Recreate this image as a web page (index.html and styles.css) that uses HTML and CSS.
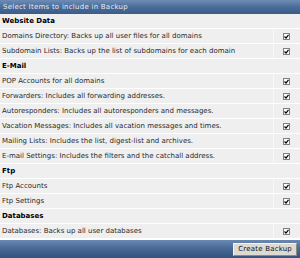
FILE: index.html
```html
<!DOCTYPE html>
<html>
<head>
<meta charset="utf-8">
<link rel="stylesheet" href="styles.css">
</head>
<body>
<div class="panel">
  <div class="head">Select Items to include in Backup</div>
  <div class="row section"><span class="label">Website Data</span></div>
  <div class="row item"><span class="label">Domains Directory: Backs up all user files for all domains</span><span class="cb"><svg width="7" height="7" viewBox="0 0 7 7"><rect x="0.5" y="0.5" width="6" height="6" fill="#fff" stroke="#808080"/><path d="M1.5 3.5 L3 5 L5.5 1.8" fill="none" stroke="#000" stroke-width="1.2"/></svg></span></div>
  <div class="row item"><span class="label">Subdomain Lists: Backs up the list of subdomains for each domain</span><span class="cb"><svg width="7" height="7" viewBox="0 0 7 7"><rect x="0.5" y="0.5" width="6" height="6" fill="#fff" stroke="#808080"/><path d="M1.5 3.5 L3 5 L5.5 1.8" fill="none" stroke="#000" stroke-width="1.2"/></svg></span></div>
  <div class="row section"><span class="label">E-Mail</span></div>
  <div class="row item"><span class="label">POP Accounts for all domains</span><span class="cb"><svg width="7" height="7" viewBox="0 0 7 7"><rect x="0.5" y="0.5" width="6" height="6" fill="#fff" stroke="#808080"/><path d="M1.5 3.5 L3 5 L5.5 1.8" fill="none" stroke="#000" stroke-width="1.2"/></svg></span></div>
  <div class="row item"><span class="label">Forwarders: Includes all forwarding addresses.</span><span class="cb"><svg width="7" height="7" viewBox="0 0 7 7"><rect x="0.5" y="0.5" width="6" height="6" fill="#fff" stroke="#808080"/><path d="M1.5 3.5 L3 5 L5.5 1.8" fill="none" stroke="#000" stroke-width="1.2"/></svg></span></div>
  <div class="row item"><span class="label">Autoresponders: Includes all autoresponders and messages.</span><span class="cb"><svg width="7" height="7" viewBox="0 0 7 7"><rect x="0.5" y="0.5" width="6" height="6" fill="#fff" stroke="#808080"/><path d="M1.5 3.5 L3 5 L5.5 1.8" fill="none" stroke="#000" stroke-width="1.2"/></svg></span></div>
  <div class="row item"><span class="label">Vacation Messages: Includes all vacation messages and times.</span><span class="cb"><svg width="7" height="7" viewBox="0 0 7 7"><rect x="0.5" y="0.5" width="6" height="6" fill="#fff" stroke="#808080"/><path d="M1.5 3.5 L3 5 L5.5 1.8" fill="none" stroke="#000" stroke-width="1.2"/></svg></span></div>
  <div class="row item"><span class="label">Mailing Lists: Includes the list, digest-list and archives.</span><span class="cb"><svg width="7" height="7" viewBox="0 0 7 7"><rect x="0.5" y="0.5" width="6" height="6" fill="#fff" stroke="#808080"/><path d="M1.5 3.5 L3 5 L5.5 1.8" fill="none" stroke="#000" stroke-width="1.2"/></svg></span></div>
  <div class="row item"><span class="label">E-mail Settings: Includes the filters and the catchall address.</span><span class="cb"><svg width="7" height="7" viewBox="0 0 7 7"><rect x="0.5" y="0.5" width="6" height="6" fill="#fff" stroke="#808080"/><path d="M1.5 3.5 L3 5 L5.5 1.8" fill="none" stroke="#000" stroke-width="1.2"/></svg></span></div>
  <div class="row section"><span class="label">Ftp</span></div>
  <div class="row item"><span class="label">Ftp Accounts</span><span class="cb"><svg width="7" height="7" viewBox="0 0 7 7"><rect x="0.5" y="0.5" width="6" height="6" fill="#fff" stroke="#808080"/><path d="M1.5 3.5 L3 5 L5.5 1.8" fill="none" stroke="#000" stroke-width="1.2"/></svg></span></div>
  <div class="row item"><span class="label">Ftp Settings</span><span class="cb"><svg width="7" height="7" viewBox="0 0 7 7"><rect x="0.5" y="0.5" width="6" height="6" fill="#fff" stroke="#808080"/><path d="M1.5 3.5 L3 5 L5.5 1.8" fill="none" stroke="#000" stroke-width="1.2"/></svg></span></div>
  <div class="row section"><span class="label">Databases</span></div>
  <div class="row item"><span class="label">Databases: Backs up all user databases</span><span class="cb"><svg width="7" height="7" viewBox="0 0 7 7"><rect x="0.5" y="0.5" width="6" height="6" fill="#fff" stroke="#808080"/><path d="M1.5 3.5 L3 5 L5.5 1.8" fill="none" stroke="#000" stroke-width="1.2"/></svg></span></div>
  <div class="foot"><button class="btn">Create Backup</button></div>
</div>
</body>
</html>
```
FILE: styles.css
```css
html, body {
  margin: 0;
  padding: 0;
  background: #ffffff;
}
.panel {
  width: 300px;
  height: 258px;
  display: flex;
  flex-direction: column;
  font-family: "DejaVu Sans", sans-serif;
  font-size: 7px;
  color: #2a2a2a;
  overflow: hidden;
}
.head {
  height: 14px;
  box-sizing: border-box;
  padding: 0 3px;
  display: flex;
  align-items: center;
  letter-spacing: 0.25px;
  color: #e4ebf4;
  background: linear-gradient(#6d8db6, #4a6c98 50%, #3b5c88);
}
.row {
  height: 15px;
  box-sizing: border-box;
  display: grid;
  grid-template-columns: 1fr 27px;
  background: #efefef;
  border-bottom: 1px solid #ffffff;
}
.label {
  display: flex;
  align-items: center;
  padding-left: 2px;
  white-space: nowrap;
}
.section .label {
  font-weight: bold;
  color: #000;
}
.cb {
  display: flex;
  align-items: center;
  justify-content: center;
  padding-right: 1px;
  border-left: 1px solid #f8f8f8;
}
.cb svg {
  display: block;
}
.foot {
  flex: 1;
  display: flex;
  justify-content: flex-end;
  align-items: center;
  padding: 0 3px 0 0;
  margin-top: 1px;
  background: linear-gradient(#6a8ab4, #4a6b96 45%, #33527c);
}
.btn {
  font-family: "DejaVu Sans", sans-serif;
  font-size: 7px;
  letter-spacing: 0.2px;
  color: #111;
  height: 13px;
  padding: 0 4px;
  background: #dcdad2;
  border: 1px solid;
  border-color: #f4f4f0 #8c8a84 #8c8a84 #f4f4f0;
  border-radius: 0;
}
```
